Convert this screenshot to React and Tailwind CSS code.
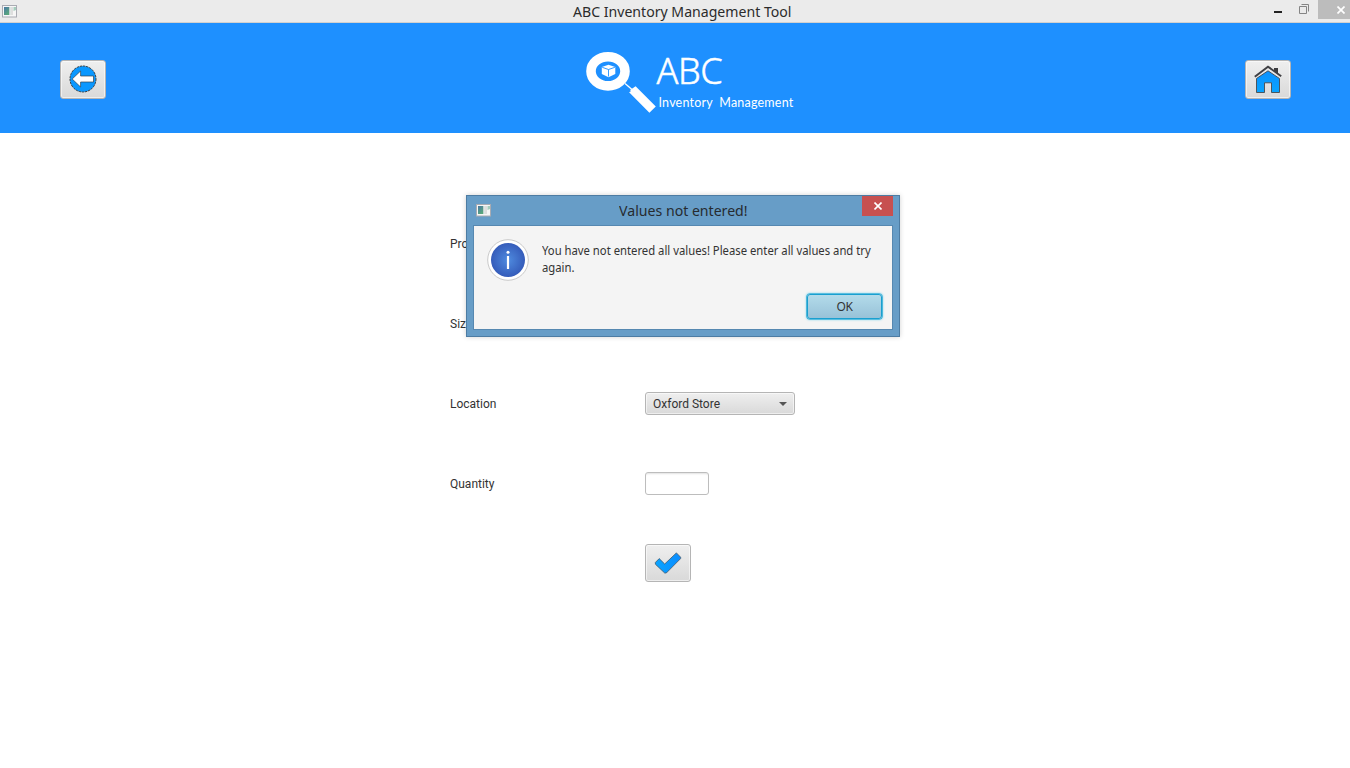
const buttonFace =
  'flex items-center justify-center rounded-[3px] border border-[#b5b5b5] bg-linear-to-b from-[#efefef] to-[#d9d9d9] shadow-[inset_0_0_0_1px_rgba(255,255,255,0.55)]';

function WindowIcon() {
  return (
    <svg width="16" height="14" viewBox="0 0 16 14" className="block">
      <defs>
        <linearGradient id="pane" x1="0" y1="0" x2="0.6" y2="1">
          <stop offset="0" stopColor="#4a78a5" />
          <stop offset="1" stopColor="#58a67c" />
        </linearGradient>
      </defs>
      <rect x="0.5" y="0.5" width="14" height="11.5" fill="#f6f6f6" stroke="#a9abb2" />
      <rect x="2" y="2" width="5" height="8" fill="url(#pane)" />
      <rect x="7" y="2" width="1.5" height="8" fill="#c3d3cf" />
      <rect x="9" y="2" width="2" height="8" fill="#dedede" />
      <path d="M11.5 2h2.5v3l-2.5 1z" fill="#a5cdbd" />
    </svg>
  );
}

function BackIcon() {
  return (
    <svg width="28" height="28" viewBox="0 0 28 28" className="-mt-[2px]">
      <circle cx="14" cy="14" r="13" fill="#0a98ff" />
      <circle cx="14" cy="14" r="13" fill="none" stroke="#3b4248" strokeWidth="1" strokeDasharray="2.4 0.8" />
      <path d="M3.2 14 11.6 6v5H24.5v6H11.6v5z" fill="#fff" stroke="#34444f" strokeWidth="0.7" />
    </svg>
  );
}

function HomeIcon() {
  return (
    <svg width="28" height="29" viewBox="0 0 28 29" className="-mt-[1px]">
      <defs>
        <linearGradient id="house" x1="0" y1="0" x2="0" y2="1">
          <stop offset="0" stopColor="#0a90ff" />
          <stop offset="1" stopColor="#08a4ff" />
        </linearGradient>
      </defs>
      <path d="M20 3h4v6l-4-3z" fill="#3c3c40" />
      <path d="M.8 11.7 14 1.7l13.2 9.5" fill="none" stroke="#404044" strokeWidth="2" />
      <path d="M2.5 13.5 14 5.8 25.5 13.5V27.5h-8V17.8h-7v9.7h-8z" fill="url(#house)" stroke="#45494e" strokeWidth="0.9" />
    </svg>
  );
}

function CheckIcon() {
  return (
    <svg width="28" height="22" viewBox="0 0 28 22" className="-mt-[1px]">
      <defs>
        <linearGradient id="tick" x1="0" y1="0" x2="1" y2="0">
          <stop offset="0" stopColor="#0aa4ff" />
          <stop offset="1" stopColor="#0a8cff" />
        </linearGradient>
      </defs>
      <path
        d="M1.4 10.4 5.2 6.6 10.7 12 22.4.9 26.6 5.2v1.4L12.3 21h-1.6L1.4 12.2z"
        fill="url(#tick)"
        stroke="#40586c"
        strokeWidth="0.8"
      />
    </svg>
  );
}

function LogoMark() {
  return (
    <svg width="72" height="64" viewBox="0 0 72 64" className="block shrink-0">
      <ellipse cx="23" cy="21.3" rx="17" ry="14.6" fill="none" stroke="#fff" strokeWidth="9.6" />
      <path d="m23.5 14.8 6.8 2.2v7l-6.8 3.2-6.7-3.2v-7z" fill="#fff" />
      <path d="m17.2 17.3 6.3 2.2 6.4-2.2M23.5 19.5v7" fill="none" stroke="#1e90ff" strokeWidth="0.9" />
      <path d="m40 33.5 7 6" stroke="#fff" strokeWidth="1.3" />
      <path d="m50.6 36.2 20.2 20.4-6.4 6.2-20.3-20.6 1.8-.9-.8-1.2z" fill="#fff" />
    </svg>
  );
}

function InfoIcon() {
  return (
    <svg width="42" height="42" viewBox="0 0 42 42" className="shrink-0">
      <defs>
        <radialGradient id="info">
          <stop offset="0" stopColor="#4f8bdf" />
          <stop offset="1" stopColor="#355cba" />
        </radialGradient>
      </defs>
      <circle cx="21" cy="21" r="20.3" fill="#fff" stroke="#c9c9c9" strokeWidth="1" />
      <circle cx="21" cy="21" r="17" fill="url(#info)" />
      <circle cx="21" cy="13.3" r="1.5" fill="#fff" />
      <path d="M21 17v13" stroke="#fff" strokeWidth="2.2" />
    </svg>
  );
}

function TitleBar() {
  return (
    <div className="grid h-[23px] shrink-0 grid-cols-[1fr_auto_1fr] border-b border-[#d3d1cf] bg-[#ebebeb]">
      <div className="pt-[5px] pl-[2px]">
        <WindowIcon />
      </div>
      <div className="ml-[14px] scale-x-94 font-['Noto_Sans',sans-serif] text-[15px] leading-[23px] text-[#2b2b2b]">
        ABC Inventory Management Tool
      </div>
      <div className="flex justify-end">
        <svg width="44" height="19" viewBox="0 0 44 19">
          <path d="M0 11h8v2H0z" fill="#222" />
          <path d="M25.5 6.5h7v7h-7zM27.5 4.5h7v7" fill="none" stroke="#858585" />
        </svg>
        <div className="flex h-[19px] w-8 items-center justify-end bg-[#bcbcbc] pr-[5px]">
          <svg width="8" height="8" viewBox="0 0 8 8">
            <path d="m.5.5 7 7m0-7-7 7" stroke="#fff" strokeWidth="1.7" />
          </svg>
        </div>
      </div>
    </div>
  );
}

function Header() {
  return (
    <header className="grid h-[110px] shrink-0 grid-cols-[1fr_auto_1fr] items-start bg-[#1e90ff] pr-[59px] pl-[60px]">
      <button className={`mt-[37px] h-[39px] w-[46px] ${buttonFace}`}>
        <BackIcon />
      </button>
      <div className="flex pt-[27px] pl-7">
        <LogoMark />
        <div className="w-[138px] text-white">
          <div className="h-[45px] font-['Noto_Sans',sans-serif] text-[36px] leading-[41px] font-light tracking-[-0.4px] [-webkit-text-stroke:0.5px_white]">
            ABC
          </div>
          <div className="pl-[2px] font-['Lato',sans-serif] text-[12.5px] leading-4 tracking-[0.2px] whitespace-nowrap">
            Inventory&nbsp; Management
          </div>
        </div>
      </div>
      <button className={`mt-[37px] h-[39px] w-[46px] justify-self-end ${buttonFace}`}>
        <HomeIcon />
      </button>
    </header>
  );
}

function Row({ label, children }) {
  return (
    <div className="flex h-20 items-center">
      <div className="w-[195px] pt-[2px] text-[#333]">{label}</div>
      {children}
    </div>
  );
}

function Field({ width }) {
  return (
    <div
      className="h-[23px] rounded-[3px] border border-[#bdbdbd] bg-white shadow-[inset_0_2px_2px_-1px_#e2e2e2]"
      style={{ width }}
    />
  );
}

function Dialog() {
  return (
    <div
      role="dialog"
      className="absolute top-[195px] left-[466px] flex h-[142px] w-[434px] flex-col border border-[#4d7ca3] bg-[#679dc7] px-[6px] pb-[6px] font-['Noto_Sans',sans-serif] shadow-[0_0_5px_rgba(0,0,0,0.18)]"
    >
      <div className="grid h-[29px] shrink-0 grid-cols-[1fr_auto_1fr]">
        <div className="pt-[8px] pl-[3px]">
          <WindowIcon />
        </div>
        <div className="scale-x-94 text-[15px] leading-[29px] text-[#262b30]">Values not entered!</div>
        <div className="flex h-[20px] w-[31px] items-center justify-center justify-self-end bg-[#c75050]">
          <svg width="8" height="8" viewBox="0 0 8 8">
            <path d="m.5.5 7 7m0-7-7 7" stroke="#fff" strokeWidth="1.6" />
          </svg>
        </div>
      </div>
      <div className="flex grow flex-col border border-[#5688b1] bg-[#f4f4f4] pr-[10px] pl-[13px]">
        <div className="flex pt-[13px]">
          <InfoIcon />
          <p className="ml-[13px] origin-left scale-x-94 pt-[3px] text-[12px] leading-[17px] whitespace-nowrap text-[#333]">
            You have not entered all values! Please enter all values and try
            <br />
            again.
          </p>
        </div>
        <button className="mt-[13px] h-[25px] w-[75px] self-end rounded-[3px] border border-[#1a9fcf] bg-linear-to-b from-[#b3dbea] to-[#98c2d8] text-[12px] leading-[23px] tracking-[-0.3px] text-[#333] shadow-[0_0_0_0.6px_#1a9fcf,0_0_2px_1px_#7fd4ec]">
          OK
        </button>
      </div>
    </div>
  );
}

export default function App() {
  return (
    <div className="relative flex h-[768px] w-[1350px] flex-col overflow-hidden bg-white font-['Roboto',sans-serif] text-[12px]">
      <TitleBar />
      <Header />
      <main className="flex flex-col pt-[70px] pl-[450px]">
        <Row label="Product">
          <Field width={150} />
        </Row>
        <Row label="Size">
          <Field width={150} />
        </Row>
        <Row label="Location">
          <button className={`h-[23px] w-[150px] px-[7px] text-[#333] ${buttonFace}`}>
            <span className="grow pt-[2px] text-left">Oxford Store</span>
            <svg width="8" height="4" viewBox="0 0 8 4" className="mt-[2px]">
              <path d="M0 0h8L4 4z" fill="#555" />
            </svg>
          </button>
        </Row>
        <Row label="Quantity">
          <Field width={64} />
        </Row>
        <Row label="">
          <button className={`h-[38px] w-[46px] ${buttonFace}`}>
            <CheckIcon />
          </button>
        </Row>
      </main>
      <Dialog />
    </div>
  );
}
